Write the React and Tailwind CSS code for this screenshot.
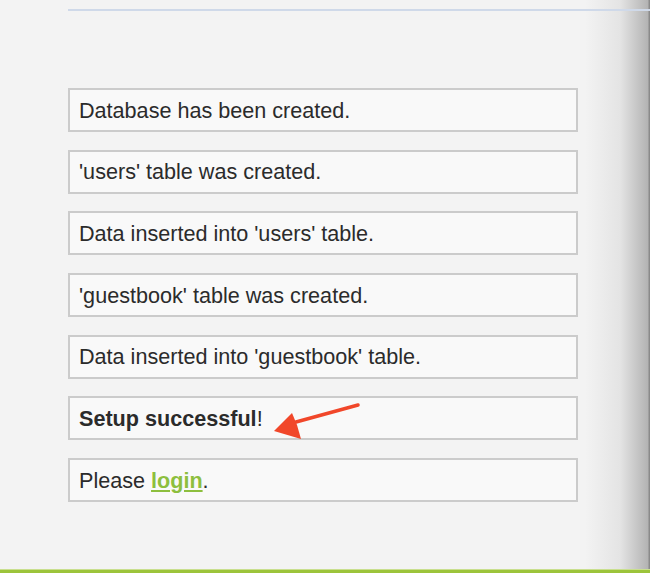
import React from 'react';

const messages = [
  "Database has been created.",
  "'users' table was created.",
  "Data inserted into 'users' table.",
  "'guestbook' table was created.",
  "Data inserted into 'guestbook' table.",
];

const Box = ({ children }) => (
  <div className="h-[44px] flex items-center px-[9px] pt-[2px] border-2 border-[#cbcbcb] bg-[#f9f9f9] text-[21.6px] text-[#2b2b2b]">
    {children}
  </div>
);

const App = () => {
  return (
    <div
      className="relative min-h-[573px] flex flex-col overflow-hidden bg-[linear-gradient(to_right,#f3f3f3_585px,#e4e4e4_620px,#b3b3b3_648px,#8a8a8a_649px)]"
      style={{ fontFamily: '"Liberation Sans", Arial, sans-serif' }}
    >
      <div className="ml-[68px] mt-[9px] h-[2px] bg-[#cfd9e9]" />

      <div className="ml-[68px] mt-[77px] w-[510px] flex flex-col gap-[17.67px]">
        {messages.map((m) => (
          <Box key={m}>{m}</Box>
        ))}
        <Box>
          <span><b>Setup successful</b>!</span>
        </Box>
        <Box>
          <span>
            Please{' '}
            <a href="#" className="font-bold text-[#8dbf3e] underline underline-offset-2">login</a>.
          </span>
        </Box>
      </div>

      {/* annotation arrow */}
      <svg className="absolute left-[270px] top-[400px]" width="95" height="42" viewBox="0 0 95 42">
        <path d="M88 5 L26 22" stroke="#f1472a" strokeWidth="3.5" strokeLinecap="round" />
        <path d="M4 31 L22 13 L27 25 L31 39 Z" fill="#f1472a" />
      </svg>

      <div className="mt-auto h-[1px] bg-[#c9df8f]" />
      <div className="h-[3px] bg-[#9cc43b]" />
    </div>
  );
};

export default App;
